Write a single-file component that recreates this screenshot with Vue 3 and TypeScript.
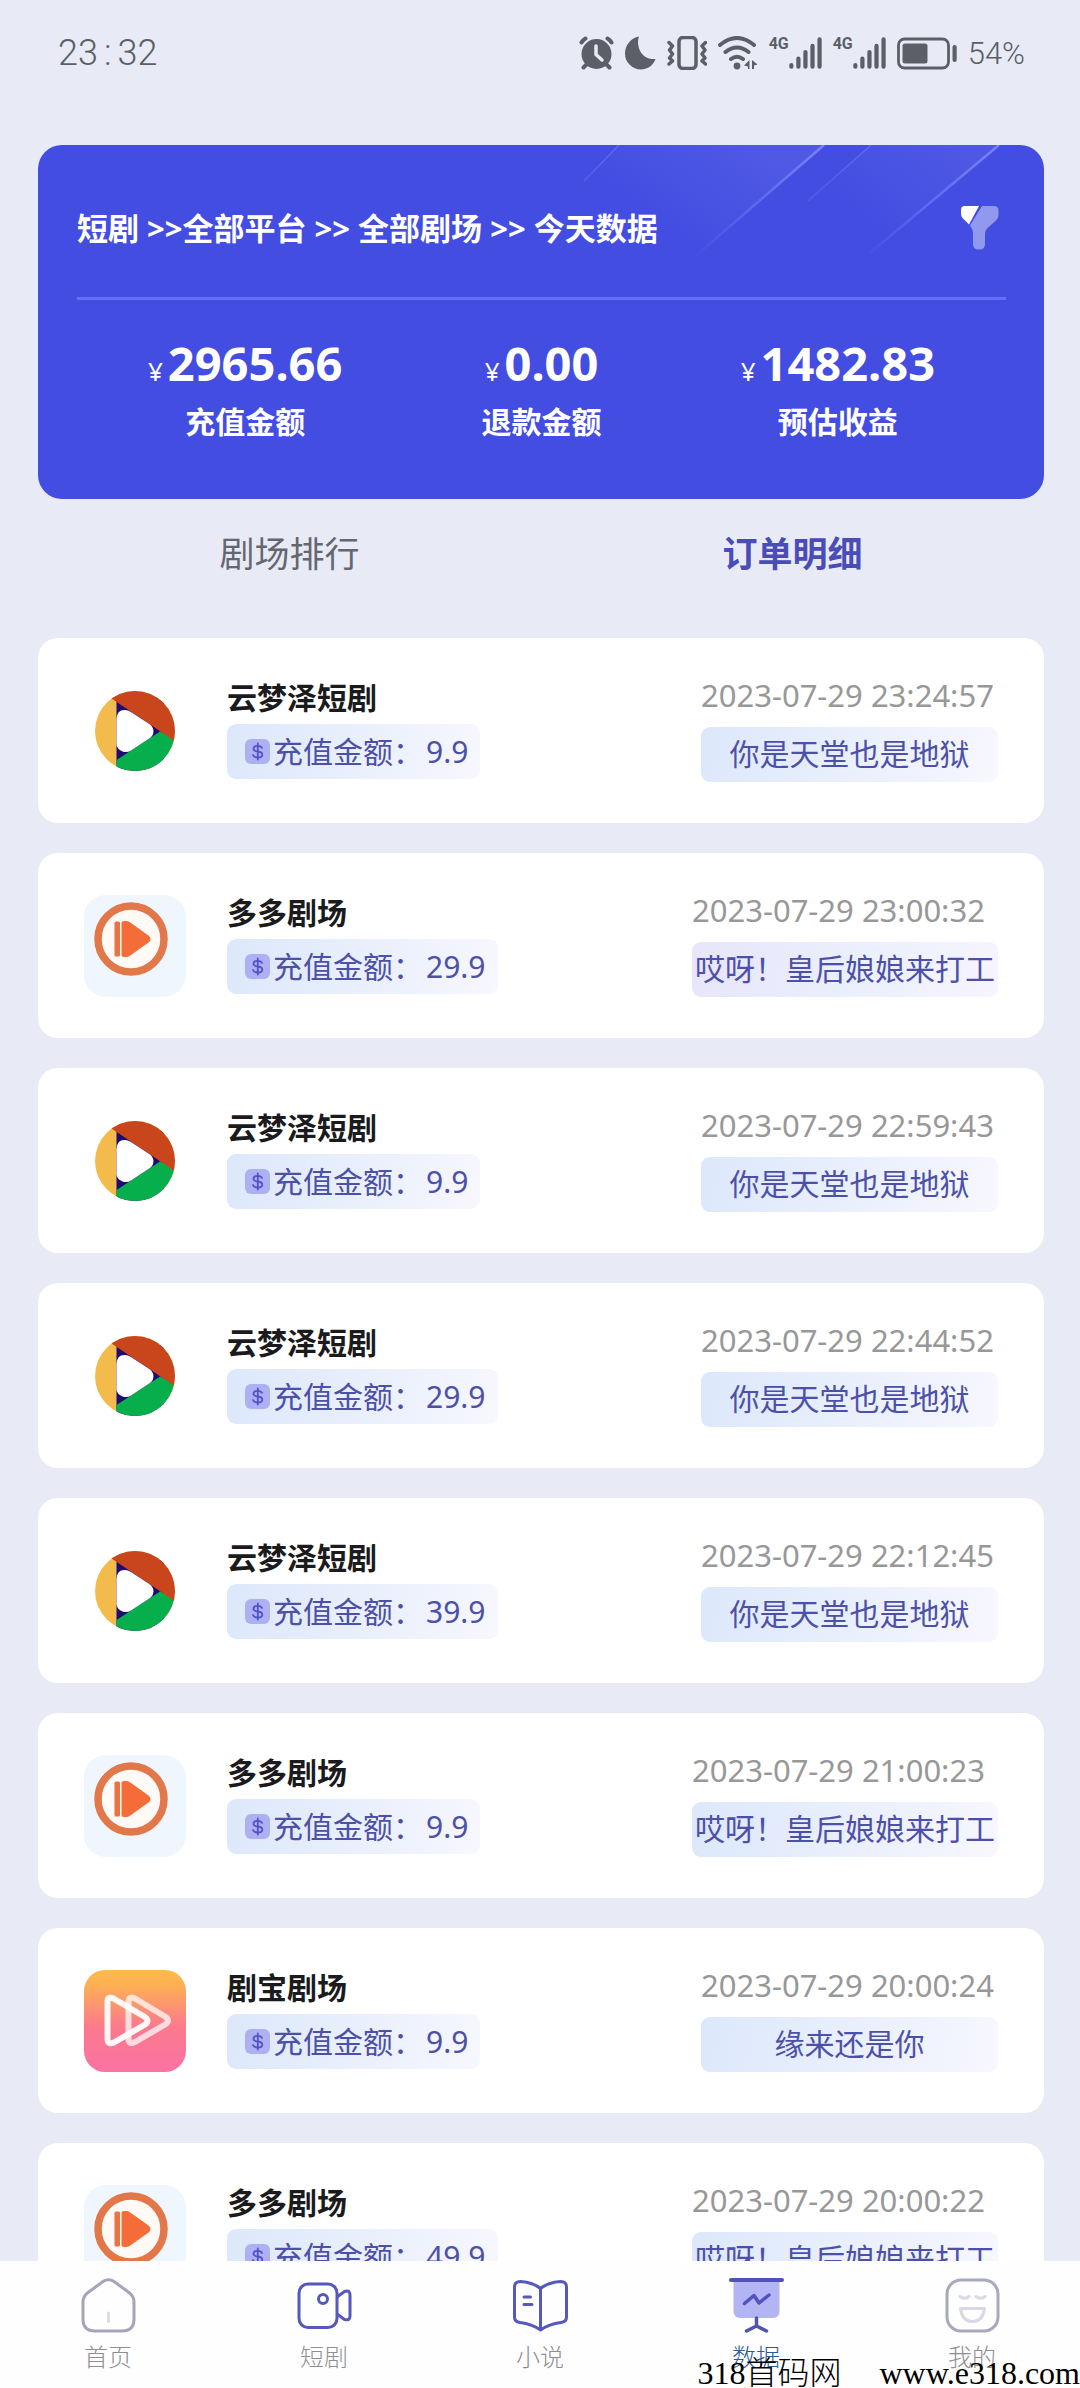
<script setup lang="ts">
import { ref } from 'vue'

type Theater = 'yunmengze' | 'duoduo' | 'jubao'

interface Order {
  id: number
  theater: Theater
  amount: string
  time: string
  drama: string
  tint: 'blue' | 'violet'
}

const theaterNames: Record<Theater, string> = {
  yunmengze: '云梦泽短剧',
  duoduo: '多多剧场',
  jubao: '剧宝剧场',
}

const totals = [
  { label: '充值金额', value: '2965.66' },
  { label: '退款金额', value: '0.00' },
  { label: '预估收益', value: '1482.83' },
]

const tabs = ['剧场排行', '订单明细']
const activeTab = ref('订单明细')

const orders: Order[] = [
  { id: 1, theater: 'yunmengze', amount: '9.9', time: '2023-07-29 23:24:57', drama: '你是天堂也是地狱', tint: 'blue' },
  { id: 2, theater: 'duoduo', amount: '29.9', time: '2023-07-29 23:00:32', drama: '哎呀！皇后娘娘来打工', tint: 'violet' },
  { id: 3, theater: 'yunmengze', amount: '9.9', time: '2023-07-29 22:59:43', drama: '你是天堂也是地狱', tint: 'blue' },
  { id: 4, theater: 'yunmengze', amount: '29.9', time: '2023-07-29 22:44:52', drama: '你是天堂也是地狱', tint: 'blue' },
  { id: 5, theater: 'yunmengze', amount: '39.9', time: '2023-07-29 22:12:45', drama: '你是天堂也是地狱', tint: 'blue' },
  { id: 6, theater: 'duoduo', amount: '9.9', time: '2023-07-29 21:00:23', drama: '哎呀！皇后娘娘来打工', tint: 'blue' },
  { id: 7, theater: 'jubao', amount: '9.9', time: '2023-07-29 20:00:24', drama: '缘来还是你', tint: 'blue' },
  { id: 8, theater: 'duoduo', amount: '49.9', time: '2023-07-29 20:00:22', drama: '哎呀！皇后娘娘来打工', tint: 'blue' },
]
</script>

<template>
  <div class="page">
    <header class="status">
      <span class="clock">23<span class="colon">:</span>32</span>
      <div class="status-icons">
        <svg width="35" height="34" viewBox="0 0 35 34" aria-hidden="true">
          <g fill="none" stroke="#5c5f68" stroke-width="4" stroke-linecap="round">
            <path d="M2.500 6.500Q4 4 6.500 2.500M32.500 6.500Q31 4 28.500 2.500M8 28L4.500 31.500M27 28L30.500 31.500" />
          </g>
          <circle cx="17.500" cy="18" r="15" fill="#5c5f68" />
          <path d="M17 10V18.500L23 24" fill="none" stroke="#e8ebf5" stroke-width="3.500" stroke-linecap="round" stroke-linejoin="round" />
        </svg>
        <svg width="31" height="34" viewBox="0 0 31 34" aria-hidden="true">
          <path d="M14 .5C11 9 15 24 30.500 23C28 30 22 33.500 16 33.500A16 16 0 0 1 0 17.500C0 9 6 2 14 .5Z" fill="#5c5f68" />
        </svg>
        <svg width="40" height="34" viewBox="0 0 40 34" fill="none" stroke="#5c5f68" aria-hidden="true">
          <rect x="12" y="1.500" width="17" height="31" rx="4" stroke-width="3.500" />
          <path d="M2 6.500L5.500 10L2.500 14L5.500 18L2.500 22L5.500 25L2 28M38.500 6.500L35 10L38 14L35 18L38 22L35 25L38.500 28" stroke-width="3.500" stroke-linejoin="round" stroke-linecap="round" />
        </svg>
        <svg width="40" height="34" viewBox="0 0 40 34" aria-hidden="true">
          <g fill="none" stroke="#5c5f68" stroke-width="4" stroke-linecap="round">
            <path d="M2 9Q19 -5 36 9M7.500 16Q19 7 30.500 16M13 23Q19 18.500 25 23" />
          </g>
          <circle cx="19" cy="30" r="3.400" fill="#5c5f68" />
          <path d="M31.500 24V33H30V30.500L26 29.500ZM34 24L39.500 28.500L36 29.500V33H34Z" fill="#5c5f68" />
        </svg>
        <span v-for="n in 2" :key="n" class="signal">
          <span class="net">4G</span>
          <svg width="35" height="34" viewBox="0 0 35 34" stroke="#5c5f68" stroke-width="4.500" stroke-linecap="round" aria-hidden="true">
            <path d="M2.500 30V31.500M10 23V31.500M17.500 16V31.500M25 9.500V31.500M32.500 2.500V31.500" />
          </svg>
        </span>
        <svg width="60" height="34" viewBox="0 0 60 34" aria-hidden="true">
          <rect x="1.500" y="3" width="50" height="29" rx="6" fill="none" stroke="#5c5f68" stroke-width="2.800" />
          <rect x="5.500" y="7.500" width="25" height="20" rx="2.500" fill="#5c5f68" />
          <rect x="55.500" y="9" width="4.200" height="17" rx="2" fill="#5c5f68" />
        </svg>
        <span class="battery-level">54%</span>
      </div>
    </header>

    <main class="content">
      <section class="summary">
        <svg class="streaks" viewBox="0 0 484 140" width="484" height="140" aria-hidden="true">
          <defs>
            <linearGradient id="band" gradientUnits="userSpaceOnUse" x1="200" y1="0" x2="130" y2="100">
              <stop offset="0" stop-color="#fff" stop-opacity=".07" />
              <stop offset="1" stop-color="#fff" stop-opacity="0" />
            </linearGradient>
            <linearGradient id="band-right" gradientUnits="userSpaceOnUse" x1="390" y1="0" x2="320" y2="90">
              <stop offset="0" stop-color="#fff" stop-opacity=".06" />
              <stop offset="1" stop-color="#fff" stop-opacity="0" />
            </linearGradient>
            <linearGradient id="ray" gradientUnits="userSpaceOnUse" x1="0" y1="0" x2="0" y2="115">
              <stop offset="0" stop-color="#7f86ff" stop-opacity=".9" />
              <stop offset="1" stop-color="#7f86ff" stop-opacity="0" />
            </linearGradient>
          </defs>
          <path d="M59 0H264L130 115H-60Z" fill="url(#band)" />
          <path d="M310 0H439L310 110H190Z" fill="url(#band-right)" />
          <path d="M264 0L131 115M439 0L310 108" stroke="url(#ray)" stroke-width="2.500" />
          <path d="M59 0L24 36M311 0L248 56" stroke="url(#ray)" stroke-width="1.500" opacity=".5" />
        </svg>
        <div class="scope">
          <h1 class="path">短剧 &gt;&gt;全部平台 &gt;&gt; 全部剧场 &gt;&gt; 今天数据</h1>
          <button class="filter" type="button" aria-label="筛选">
            <svg width="38" height="44" viewBox="0 0 38 44" aria-hidden="true">
              <path d="M3.500 0H18L8 18.500L1.500 12Q0 10 0 8V4Q0 0 3.500 0Z" fill="#fff" />
              <path d="M21 0H33Q37.500 0 37.500 4.500V9Q37.500 12 35 14.500L26.500 22Q24 24.500 24 28V38Q24 43.500 18 43.500Q12 43.500 12 38V27Q12 24 10.500 22L9 19.500Z" fill="#9199ee" />
            </svg>
          </button>
        </div>
        <dl class="totals">
          <div v-for="item in totals" :key="item.label" class="total">
            <dd class="value"><span class="yen">¥</span>{{ item.value }}</dd>
            <dt class="label">{{ item.label }}</dt>
          </div>
        </dl>
      </section>

      <div class="tabs" role="tablist">
        <button
          v-for="tab in tabs"
          :key="tab"
          type="button"
          role="tab"
          class="tab"
          :class="{ active: tab === activeTab }"
          :aria-selected="tab === activeTab"
          @click="activeTab = tab"
        >{{ tab }}</button>
      </div>

      <ul class="orders">
        <li v-for="order in orders" :key="order.id" class="order">
          <svg v-if="order.theater === 'yunmengze'" class="logo logo-round" viewBox="0 0 102 102" aria-hidden="true">
            <rect width="102" height="102" fill="#f3bb4b" />
            <path d="M32.500 20H80V100H32.500Z" fill="#1d0a72" />
            <path d="M74 50L102 66V102H32.500V80L76 51.500Z" fill="#07ae4c" />
            <path d="M27.500 18.500L98 66V0H20Z" fill="#c9461d" />
            <path d="M32.500 39Q33 29.500 41 30Q44 30 47 32L66 44.500Q69.500 47.500 69.500 51.500Q69 56 66 58L47 70.500Q43 73 38.500 71.500Q33.500 69.500 32.500 65Z" fill="#fff" />
          </svg>
          <svg v-else-if="order.theater === 'duoduo'" class="logo" viewBox="0 0 102 102" aria-hidden="true">
            <rect width="102" height="102" rx="22" fill="#f0f6fd" />
            <circle cx="47" cy="44" r="33" fill="#fffaf6" stroke="#e2774a" stroke-width="7.500" />
            <rect x="30.500" y="26.500" width="5.500" height="35" rx="1.500" fill="#e87343" />
            <path d="M37.500 28Q37.500 26 40 26H42.500Q44.500 26 47 28L64.500 40.500Q66.500 42 66.500 44Q66.500 46 64.500 47.500L47 60Q44.500 62 42.500 62H40Q37.500 62 37.500 60Z" fill="#f46d38" />
          </svg>
          <svg v-else class="logo" viewBox="0 0 102 102" aria-hidden="true">
            <defs>
              <linearGradient id="sunset" x1="0" y1="0" x2="0" y2="1">
                <stop offset="0" stop-color="#fdbb48" />
                <stop offset=".15" stop-color="#fdb054" />
                <stop offset=".55" stop-color="#fb7a8c" />
                <stop offset="1" stop-color="#fb72a4" />
              </linearGradient>
            </defs>
            <rect width="102" height="102" rx="21" fill="url(#sunset)" />
            <g fill="none" stroke="#fff" stroke-width="6" stroke-linejoin="round">
              <path d="M44.500 32Q44.500 25.500 51 28.500L81 46.500Q87 50.500 81 54.500L51 72Q44.500 75 44.500 69Z" opacity=".72" />
              <path d="M23.500 31Q24 26 29.500 28.500L61 47Q66 51 61 54.500L30 72.500Q24 75 23.500 69.500Z" opacity=".95" />
            </g>
          </svg>

          <div class="source">
            <h2 class="name">{{ theaterNames[order.theater] }}</h2>
            <p class="pill amount">
              <svg class="coin" viewBox="0 0 25 25" aria-hidden="true">
                <rect width="25" height="25" rx="6" fill="#aeb0f3" />
                <path d="M17 9Q16 6.800 12.800 6.800Q8.500 6.800 8.500 9.700Q8.500 12 12.800 12.500Q17.300 13 17.300 15.700Q17.300 18.500 12.800 18.500Q9 18.500 8 16M12.800 4.500V20.500" fill="none" stroke="#5053c4" stroke-width="1.800" stroke-linecap="round" />
              </svg>
              <span>充值金额：</span>
              <span>{{ order.amount }}</span>
            </p>
          </div>

          <div class="detail">
            <time class="time">{{ order.time }}</time>
            <p class="pill drama" :class="order.tint">{{ order.drama }}</p>
          </div>
        </li>
      </ul>
    </main>

    <nav class="tabbar">
      <a class="nav-item" href="#home">
        <svg class="nav-icon" viewBox="0 0 55 55" fill="none" aria-hidden="true">
          <path d="M22 3.500Q27.500 0 33 3.500L48 14.500Q53 18.500 53 24V41Q53 53 41 53H14Q2 53 2 41V24Q2 18.500 7 14.500Z" stroke="#a5a4ba" stroke-width="3" />
          <path d="M27.500 35V43.500" stroke="#dcdce8" stroke-width="3" stroke-linecap="round" />
        </svg>
        <span>首页</span>
      </a>
      <a class="nav-item" href="#drama">
        <svg class="nav-icon" viewBox="0 0 55 55" fill="none" stroke="#5558bd" stroke-width="3" aria-hidden="true">
          <rect x="2" y="6" width="38" height="43.500" rx="9" />
          <circle cx="26" cy="21" r="4.500" />
          <path d="M40 19L47.500 13.500Q53 11.500 53 17V38Q53 43 47.500 41.500L40 36" stroke-linejoin="round" />
        </svg>
        <span>短剧</span>
      </a>
      <a class="nav-item" href="#novel">
        <svg class="nav-icon" viewBox="0 0 55 55" fill="none" stroke="#5558bd" stroke-width="3" stroke-linejoin="round" aria-hidden="true">
          <path d="M27.500 10.500Q20 4.500 7.500 3.500Q1.500 3.500 1.500 9V39Q1.500 44 7 44.500Q19 46 27.500 52Q36 46 48 44.500Q53.500 44 53.500 39V9Q53.500 3.500 47.500 3.500Q35 4.500 27.500 10.500V52" />
          <path d="M11 19H17.500M11 26.500H19" stroke-linecap="round" />
        </svg>
        <span>小说</span>
      </a>
      <a class="nav-item current" href="#data" aria-current="page">
        <svg class="nav-icon" viewBox="0 0 55 55" fill="none" aria-hidden="true">
          <path d="M4.500 3H50.500V33Q50.500 40 43.500 40H11.500Q4.500 40 4.500 33Z" fill="#b3b4f3" />
          <path d="M2 2H53" stroke="#5053b4" stroke-width="4" stroke-linecap="round" />
          <path d="M15.500 25.500L25 17.500L30 25L40 17" stroke="#5053c0" stroke-width="3.500" stroke-linecap="round" stroke-linejoin="round" />
          <path d="M27.500 40V48M17.500 53L27.500 48L37.500 53" stroke="#5053b4" stroke-width="3.500" stroke-linecap="round" stroke-linejoin="round" />
        </svg>
        <span>数据</span>
      </a>
      <a class="nav-item" href="#mine">
        <svg class="nav-icon" viewBox="0 0 55 55" fill="none" stroke-linecap="round" stroke-linejoin="round" aria-hidden="true">
          <rect x="2" y="2" width="51" height="51" rx="14" stroke="#a9a9bd" stroke-width="3" />
          <path d="M15 18.500Q19.500 22 24 18.500M31 18.500Q35.500 22 40 18.500M15.500 30.500H39.500Q38 43.500 27.500 43.500Q17 43.500 15.500 30.500Z" stroke="#d8d9e5" stroke-width="3" />
        </svg>
        <span>我的</span>
      </a>
      <p class="site"><span>318首码网</span><span>www.e318.com</span></p>
    </nav>
  </div>
</template>

<style>
body {
  margin: 0;
  background: #e8ebf5;
}
</style>

<style scoped>
.page {
  display: flex;
  flex-direction: column;
  height: 100vh;
  background: #e8ebf5;
  font-family: "Noto Sans", "Noto Sans CJK SC", sans-serif;
  font-size: 30px;
}

h1,
h2,
p,
dl,
dd,
ul {
  margin: 0;
  padding: 0;
}

button {
  border: 0;
  padding: 0;
  background: none;
  font-family: inherit;
  cursor: pointer;
}

.status {
  display: flex;
  flex: none;
  align-items: center;
  justify-content: space-between;
  height: 106px;
  padding: 0 55px 0 58px;
  color: #5c5f68;
  font-family: Roboto, sans-serif;
  font-weight: 300;
}

.clock {
  font-size: 36px;
}

.colon {
  padding: 0 6px;
}

.status-icons {
  display: flex;
  align-items: center;
  gap: 11px;
}

.signal {
  display: flex;
  width: 53px;
  justify-content: flex-end;
}

.net {
  font-size: 16px;
  font-weight: 700;
  line-height: 16px;
}

.battery-level {
  font-size: 31px;
}

.content {
  flex: 1;
  min-height: 0;
  padding: 39px 36px 0 38px;
  overflow-y: auto;
  scrollbar-width: none;
}

.summary {
  position: relative;
  padding: 0 38px 57px 39px;
  border-radius: 24px;
  background: #434de2;
  color: #fff;
  overflow: hidden;
}

.streaks {
  position: absolute;
  top: 0;
  right: 0;
}

.scope {
  position: relative;
  display: flex;
  align-items: center;
  justify-content: space-between;
  padding: 61px 7px 47px 0;
  border-bottom: 3px solid #656ffb;
}

.path {
  font-size: 31px;
  font-weight: 700;
  line-height: 44px;
}

.filter svg {
  display: block;
}

.totals {
  display: flex;
  padding: 35px 20px 0;
}

.total {
  display: flex;
  flex: 1;
  flex-direction: column;
  align-items: center;
  gap: 11px;
}

.value {
  font-size: 47px;
  font-weight: 700;
  line-height: 56px;
}

.yen {
  margin-right: 5px;
  font-size: 26px;
  font-weight: 400;
  line-height: 26px;
}

.label {
  font-weight: 700;
  line-height: 40px;
}

.tabs {
  display: flex;
}

.tab {
  flex: 1;
  padding: 30px 0;
  color: #64676f;
  font-size: 35px;
  line-height: 50px;
}

.tab.active {
  color: #4a4db8;
  font-weight: 700;
}

.orders {
  display: flex;
  flex-direction: column;
  gap: 30px;
  margin-top: 29px;
  list-style: none;
}

.order {
  display: flex;
  align-items: flex-start;
  padding: 37px 46px 41px;
  border-radius: 20px;
  background: #fff;
}

.logo {
  flex: none;
  width: 102px;
  height: 102px;
  margin-top: 5px;
}

.logo-round {
  clip-path: circle(40px);
}

.source {
  flex: 1;
  margin-left: 41px;
  padding-top: 3px;
}

.name {
  color: #1b1b1d;
  font-size: 30px;
  font-weight: 700;
  line-height: 40px;
}

.pill {
  height: 55px;
  border-radius: 9px;
  background: linear-gradient(100deg, #dce8fb, #e9effc 50%, #f7f7ff);
  color: #4d50a8;
  line-height: 53px;
  white-space: nowrap;
}

.amount {
  display: flex;
  align-items: center;
  width: max-content;
  margin-top: 6px;
  padding: 0 12px 0 18px;
  gap: 3px;
}

.coin {
  width: 25px;
  height: 25px;
}

.detail {
  display: flex;
  flex-direction: column;
  gap: 12px;
  min-width: 297px;
}

.time {
  color: #989898;
  font-size: 31px;
  line-height: 40px;
  white-space: nowrap;
}

.drama {
  padding: 0 3px;
  text-align: center;
}

.drama.violet {
  background: linear-gradient(100deg, #e8e5fa, #eaf0fd 55%, #f7f4fe);
}

.tabbar {
  position: relative;
  display: flex;
  flex: none;
  height: 127px;
  background: #fefeff;
}

.nav-item {
  display: flex;
  flex: 1;
  flex-direction: column;
  align-items: center;
  gap: 9px;
  padding-top: 17px;
  color: #8f8f8f;
  font-size: 24px;
  font-weight: 300;
  line-height: 30px;
  text-decoration: none;
}

.nav-icon {
  width: 55px;
  height: 55px;
}

.current {
  color: #2b5c9c;
}

.site {
  position: absolute;
  right: 0;
  bottom: 0;
  display: flex;
  gap: 38px;
  color: #000;
  font-family: "Liberation Serif", "Noto Sans CJK SC", serif;
  font-size: 32px;
  font-weight: 300;
  line-height: 30px;
}
</style>
